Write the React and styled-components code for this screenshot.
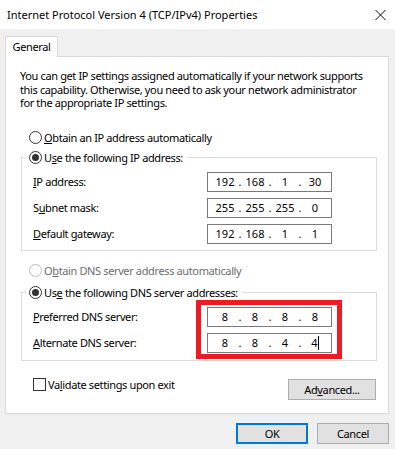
import React from "react";
import styled, { createGlobalStyle } from "styled-components";

const GlobalStyle = createGlobalStyle`
  html, body {
    margin: 0;
    padding: 0;
    background: #f0f0f0;
  }
  body {
    font-family: "Noto Sans", "Open Sans", sans-serif;
    font-size: 11px;
    letter-spacing: -0.37px;
    color: #000;
  }
  * {
    box-sizing: border-box;
  }
`;

const Window = styled.div`
  width: 395px;
  height: 449px;
  background: #f0f0f0;
  overflow: hidden;
`;

const TitleBar = styled.div`
  display: flex;
  align-items: center;
  justify-content: space-between;
  height: 29px;
  padding: 0 9px 0 7px;
  background: #fff;
`;

const Title = styled.span`
  font-size: 11px;
  letter-spacing: 0;
  color: #000;
  white-space: nowrap;
`;

const Body = styled.div`
  padding: 7px 6px 0 5px;
`;

const TabStrip = styled.div`
  display: flex;
  height: 20px;
`;

const Tab = styled.div`
  position: relative;
  z-index: 1;
  height: 21px;
  width: 53px;
  display: flex;
  align-items: center;
  justify-content: center;
  background: #fff;
  border: 1px solid #d9d9d9;
  border-bottom: none;
  padding-bottom: 1px;
`;

const Panel = styled.div`
  height: 358px;
  background: #fff;
  border: 1px solid #d9d9d9;
  padding: 12px 11px 0 14px;
`;

const Intro = styled.p`
  margin: 0;
  line-height: 13.5px;
  white-space: nowrap;
`;

const RadioRow = styled.div`
  display: flex;
  align-items: center;
  height: 16px;
  margin-top: ${({ $gap }) => $gap}px;
  padding-left: 9px;
  white-space: nowrap;
  color: ${({ $disabled }) => ($disabled ? "#6d6d6d" : "#000")};
`;

const Radio = styled.span`
  position: relative;
  display: inline-block;
  flex: none;
  width: 13px;
  height: 13px;
  border-radius: 50%;
  border: 1px solid ${({ $disabled }) => ($disabled ? "#bcbcbc" : "#333")};
  background: #fff;
  margin-right: 2px;

  &::after {
    content: "";
    display: ${({ $checked }) => ($checked ? "block" : "none")};
    position: absolute;
    left: 2px;
    top: 2px;
    width: 7px;
    height: 7px;
    border-radius: 50%;
    background: #333;
  }
`;

const Key = styled.span`
  text-decoration: underline;
  text-underline-offset: 1px;
`;

const Group = styled.fieldset`
  margin: ${({ $gap }) => $gap}px 0 0 1px;
  padding: 6px 0 ${({ $bottom }) => $bottom}px 11px;
  border: 1px solid #dcdcdc;
  min-width: 0;
`;

const Legend = styled.legend`
  display: flex;
  align-items: center;
  height: 16px;
  margin-left: -7px;
  padding: 0 4px 0 2px;
  white-space: nowrap;

  ${Radio} {
    margin-left: 1px;
  }
`;

const Rows = styled.div`
  position: relative;
  display: flex;
  flex-direction: column;
  gap: 6px;
`;

const FieldRow = styled.div`
  display: grid;
  grid-template-columns: 174px 125px;
  align-items: center;
  white-space: nowrap;
`;

const IpBox = styled.div`
  display: flex;
  align-items: center;
  height: 20px;
  border: 1px solid #7a7a7a;
  background: #fff;
  padding-left: 4px;
  letter-spacing: 0;
`;

const Octet = styled.span`
  width: 26px;
  text-align: center;
`;

const Dot = styled.span`
  width: 4px;
  text-align: center;
`;

const Caret = styled.span`
  display: inline-block;
  width: 1px;
  height: 14px;
  background: #000;
  vertical-align: -3px;
`;

const Highlight = styled.div`
  position: absolute;
  left: 163px;
  top: -7px;
  width: 146px;
  height: 59px;
  border: 5px solid #ed1c24;
  pointer-events: none;
`;

const BottomRow = styled.div`
  display: flex;
  align-items: flex-start;
  justify-content: space-between;
  margin-top: 17px;
  padding: 0 1px 0 13px;
`;

const CheckLabel = styled.label`
  display: flex;
  align-items: center;
  height: 14px;
  white-space: nowrap;
`;

const CheckBox = styled.span`
  display: inline-block;
  width: 13px;
  height: 13px;
  border: 1px solid #333;
  background: #fff;
  margin-right: 2px;
`;

const Button = styled.button`
  width: ${({ $width }) => $width}px;
  height: 21px;
  margin: ${({ $top }) => $top || 0}px 0 0;
  padding: 0;
  font: inherit;
  letter-spacing: inherit;
  color: #000;
  background: #e1e1e1;
  border: ${({ $default }) => ($default ? "2px solid #0078d7" : "1px solid #adadad")};
`;

const Footer = styled.div`
  display: flex;
  justify-content: flex-end;
  gap: 9px;
  margin-top: 9px;
`;

const IpField = ({ parts, caret }) => (
  <IpBox>
    {parts.map((p, i) => (
      <React.Fragment key={i}>
        {i > 0 && <Dot>.</Dot>}
        <Octet>
          {p}
          {caret && i === parts.length - 1 && <Caret />}
        </Octet>
      </React.Fragment>
    ))}
  </IpBox>
);

const CloseIcon = () => (
  <svg width="11" height="10" viewBox="0 0 11 10">
    <path d="M0.5 0 L10.5 10 M10.5 0 L0.5 10" stroke="#000" strokeWidth="1" fill="none" />
  </svg>
);

export default function App() {
  return (
    <Window>
      <GlobalStyle />
      <TitleBar>
        <Title>Internet Protocol Version 4 (TCP/IPv4) Properties</Title>
        <CloseIcon />
      </TitleBar>
      <Body>
        <TabStrip>
          <Tab>General</Tab>
        </TabStrip>
        <Panel>
          <Intro>
            You can get IP settings assigned automatically if your network supports
            <br />
            this capability. Otherwise, you need to ask your network administrator
            <br />
            for the appropriate IP settings.
          </Intro>

          <RadioRow $gap={20}>
            <Radio />
            <span>
              <Key>O</Key>btain an IP address automatically
            </span>
          </RadioRow>

          <Group $gap={4} $bottom={6}>
            <Legend>
              <Radio $checked />
              <span>
                U<Key>s</Key>e the following IP address:
              </span>
            </Legend>
            <Rows>
              <FieldRow>
                <span>
                  <Key>I</Key>P address:
                </span>
                <IpField parts={["192", "168", "1", "30"]} />
              </FieldRow>
              <FieldRow>
                <span>
                  S<Key>u</Key>bnet mask:
                </span>
                <IpField parts={["255", "255", "255", "0"]} />
              </FieldRow>
              <FieldRow>
                <span>
                  <Key>D</Key>efault gateway:
                </span>
                <IpField parts={["192", "168", "1", "1"]} />
              </FieldRow>
            </Rows>
          </Group>

          <RadioRow $gap={12} $disabled>
            <Radio $disabled />
            <span>
              O<Key>b</Key>tain DNS server address automatically
            </span>
          </RadioRow>

          <Group $gap={6} $bottom={7}>
            <Legend>
              <Radio $checked />
              <span>
                Us<Key>e</Key> the following DNS server addresses:
              </span>
            </Legend>
            <Rows>
              <FieldRow>
                <span>
                  <Key>P</Key>referred DNS server:
                </span>
                <IpField parts={["8", "8", "8", "8"]} />
              </FieldRow>
              <FieldRow>
                <span>
                  <Key>A</Key>lternate DNS server:
                </span>
                <IpField parts={["8", "8", "4", "4"]} caret />
              </FieldRow>
              <Highlight />
            </Rows>
          </Group>

          <BottomRow>
            <CheckLabel>
              <CheckBox />
              <span>
                Va<Key>l</Key>idate settings upon exit
              </span>
            </CheckLabel>
            <Button $width={88} $top={1}>
              Ad<Key>v</Key>anced...
            </Button>
          </BottomRow>
        </Panel>
        <Footer>
          <Button $width={72} $default>
            OK
          </Button>
          <Button $width={72}>Cancel</Button>
        </Footer>
      </Body>
    </Window>
  );
}
